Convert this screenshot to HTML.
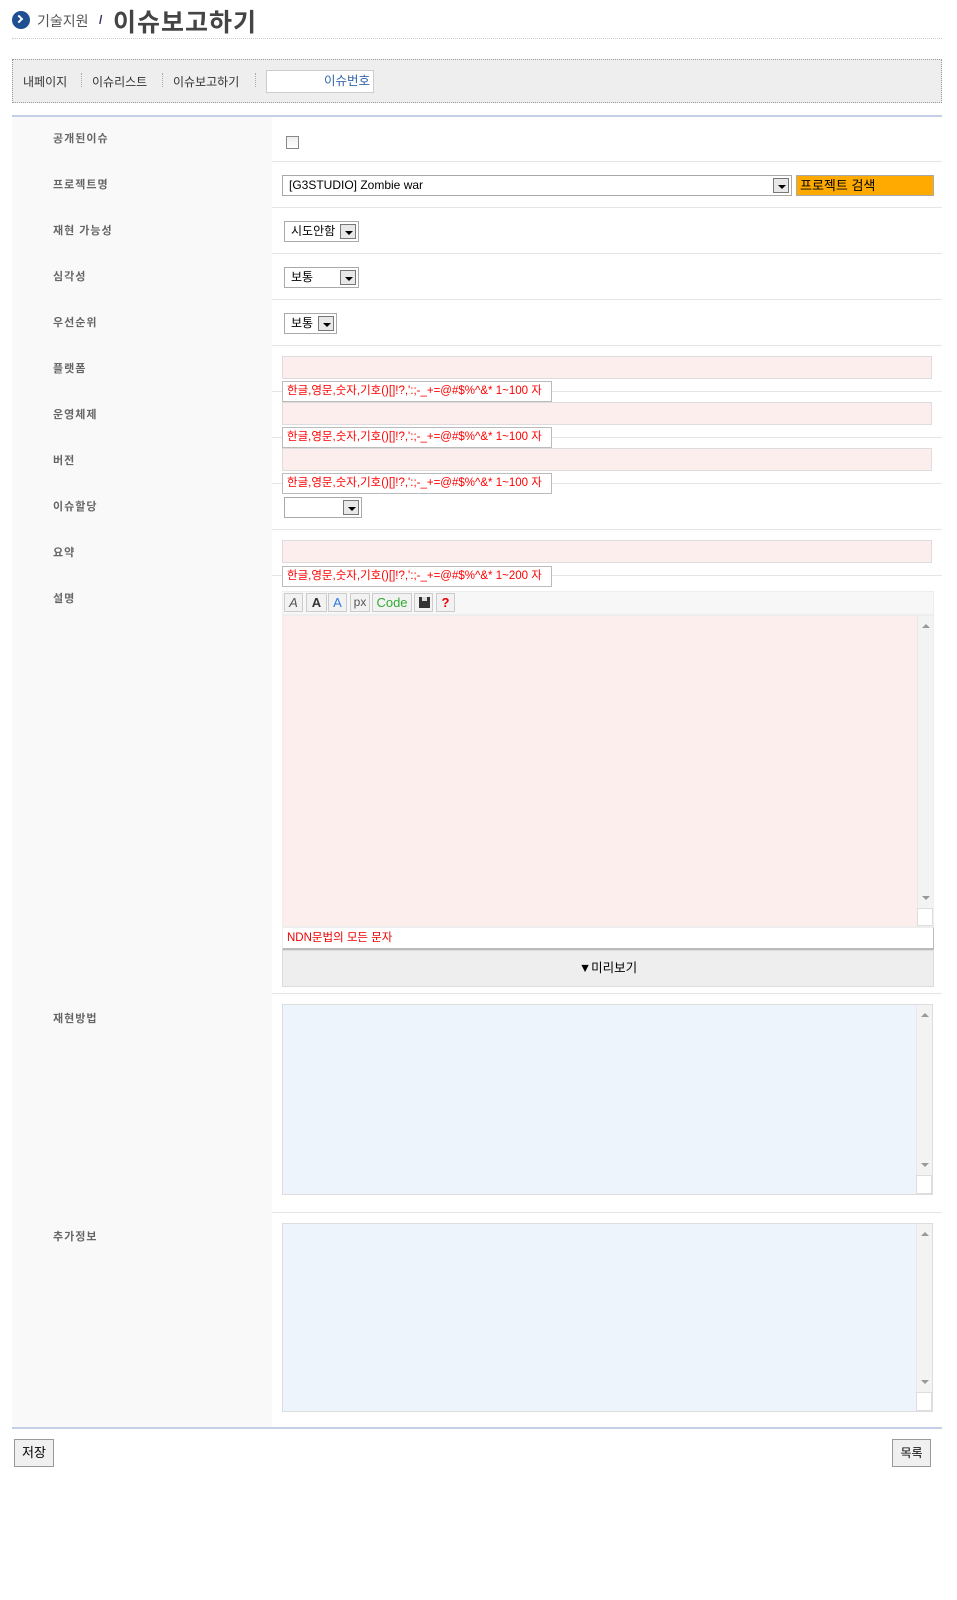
<!DOCTYPE html>
<html><head><meta charset="utf-8"><style>
*{margin:0;padding:0;box-sizing:border-box}
body{width:957px;height:1600px;background:#fff;position:relative;font-family:"Liberation Sans","Noto Sans CJK KR",sans-serif;font-size:12px;color:#333;overflow:hidden}
.a{position:absolute}
.lbl{position:absolute;left:53px;font-size:11px;font-weight:bold;color:#666;letter-spacing:1px}
.sep{position:absolute;left:272px;width:670px;height:1px;background:#e5e5e5}
.inp{position:absolute;left:282px;width:650px;height:23px;background:#fdeeee;border:1px solid #ddd}
.tip{position:absolute;left:282px;width:270px;height:21px;background:#fff;border:1px solid #bbb;color:#f00;font-size:11.5px;line-height:19px;padding-left:4px;white-space:nowrap}
.sel{position:absolute;height:21px;border:1px solid #aaa;background:#fff;font-size:12px;line-height:19px;padding-left:6px;color:#000}
.arr{position:absolute;right:2px;top:2px;width:16px;height:15px;border:1px solid #777;background:#e8e8e8}
.arr:after{content:"";position:absolute;left:4px;top:6px;border-left:4px solid transparent;border-right:4px solid transparent;border-top:4px solid #000}
.tb{position:absolute;top:593px;height:19px;border:1px solid #ccc;background:#f2f2f2;font-size:13px;line-height:17px;text-align:center}
.ta{position:absolute;left:282px;width:651px;border:1px solid #ddd;background:#edf4fc}
.sb{position:absolute;right:0;top:0;width:16px;background:#f3f3f3;border-left:1px solid #e8e8e8}
.btn{position:absolute;top:1439px;height:28px;border:1px solid #999;background:#f0f0f0;font-size:12px;line-height:26px;text-align:center;color:#000}
</style></head><body>
<div class="a" style="left:12px;top:11px;width:18px;height:18px;border-radius:50%;background:#1d4f91"></div>
<div class="a" style="left:17px;top:15px;width:6px;height:6px;border-right:2px solid #fff;border-top:2px solid #fff;transform:rotate(45deg);left:16px;top:16px"></div>
<div class="a" style="left:37px;top:11px;font-size:14px;color:#555">기술지원</div>
<div class="a" style="left:99px;top:13px;font-size:12px;color:#336;font-weight:bold">/</div>
<div class="a" style="left:113px;top:3px;font-size:25px;color:#444;font-weight:bold;letter-spacing:1px">이슈보고하기</div>
<div class="a" style="left:12px;top:38px;width:930px;border-top:1px dotted #ccc"></div>

<div class="a" style="left:12px;top:59px;width:930px;height:44px;background:#eee;border:1px dotted #999"></div>
<div class="a" style="left:23px;top:73px;font-size:12px;color:#333">내페이지</div>
<div class="a" style="left:81px;top:73px;height:14px;border-left:1px dotted #aaa"></div>
<div class="a" style="left:92px;top:73px;font-size:12px;color:#333">이슈리스트</div>
<div class="a" style="left:162px;top:73px;height:14px;border-left:1px dotted #aaa"></div>
<div class="a" style="left:173px;top:73px;font-size:12px;color:#333">이슈보고하기</div>
<div class="a" style="left:255px;top:73px;height:14px;border-left:1px dotted #aaa"></div>
<div class="a" style="left:266px;top:70px;width:108px;height:23px;background:#fff;border:1px solid #ccc;color:#36a;font-size:12.5px;text-align:right;padding-right:3px;line-height:21px">이슈번호</div>

<div class="a" style="left:12px;top:115px;width:930px;height:2px;background:#c5d0e6"></div>
<div class="a" style="left:12px;top:117px;width:260px;height:1310px;background:#f9f9f9"></div>

<div class="lbl" style="top:130px">공개된이슈</div>
<div class="a" style="left:286px;top:136px;width:13px;height:13px;border:1px solid #888;background:linear-gradient(#eee,#fff)"></div>
<div class="sep" style="top:161px"></div>
<div class="lbl" style="top:176px">프로젝트명</div>
<div class="sel" style="left:282px;top:175px;width:510px">[G3STUDIO] Zombie war<div class="arr"></div></div>
<div class="a" style="left:796px;top:175px;width:138px;height:21px;background:#ffaa00;border:1px solid #aaa;font-size:13px;line-height:19px;padding-left:3px;color:#000">프로젝트 검색</div>
<div class="sep" style="top:207px"></div>
<div class="lbl" style="top:222px">재현 가능성</div>
<div class="sel" style="left:284px;top:221px;width:75px">시도안함<div class="arr"></div></div>
<div class="sep" style="top:253px"></div>
<div class="lbl" style="top:268px">심각성</div>
<div class="sel" style="left:284px;top:267px;width:75px">보통<div class="arr"></div></div>
<div class="sep" style="top:299px"></div>
<div class="lbl" style="top:314px">우선순위</div>
<div class="sel" style="left:284px;top:313px;width:53px">보통<div class="arr"></div></div>
<div class="sep" style="top:345px"></div>
<div class="lbl" style="top:360px">플랫폼</div>
<div class="inp" style="top:356px"></div>
<div class="sep" style="top:391px"></div>
<div class="tip" style="top:381px">한글,영문,숫자,기호()[]!?,':;-_+=@#$%^&amp;* 1~100 자</div>
<div class="lbl" style="top:406px">운영체제</div>
<div class="inp" style="top:402px"></div>
<div class="sep" style="top:437px"></div>
<div class="tip" style="top:427px">한글,영문,숫자,기호()[]!?,':;-_+=@#$%^&amp;* 1~100 자</div>
<div class="lbl" style="top:452px">버전</div>
<div class="inp" style="top:448px"></div>
<div class="sep" style="top:483px"></div>
<div class="tip" style="top:473px">한글,영문,숫자,기호()[]!?,':;-_+=@#$%^&amp;* 1~100 자</div>
<div class="lbl" style="top:498px">이슈할당</div>
<div class="sel" style="left:284px;top:497px;width:78px"><div class="arr"></div></div>
<div class="sep" style="top:529px"></div>
<div class="lbl" style="top:544px">요약</div>
<div class="inp" style="top:540px"></div>
<div class="sep" style="top:575px"></div>
<div class="tip" style="top:566px">한글,영문,숫자,기호()[]!?,':;-_+=@#$%^&amp;* 1~200 자</div>
<div class="lbl" style="top:590px">설명</div>

<div class="a" style="left:282px;top:591px;width:652px;height:24px;background:#f7f7f7;border:1px solid #eee"></div>
<div class="tb" style="left:284px;width:19px;font-style:italic;color:#555">A</div>
<div class="tb" style="left:306px;width:21px;font-weight:bold;color:#333">A</div>
<div class="tb" style="left:328px;width:19px;color:#2a7ae2">A</div>
<div class="tb" style="left:350px;width:20px;color:#555;font-size:12px">px</div>
<div class="tb" style="left:372px;width:40px;color:#3a3;font-size:13px">Code</div>
<div class="tb" style="left:414px;width:19px"><div class="a" style="left:4px;top:3px;width:11px;height:11px;background:#333"></div><div class="a" style="left:7px;top:3px;width:5px;height:4px;background:#ddd"></div></div>
<div class="tb" style="left:436px;width:19px;color:#e00;font-weight:bold">?</div>
<div class="a" style="left:282px;top:615px;width:652px;height:312px;background:#fdeeee;border:1px solid #eee"><div class="sb" style="height:292px"><div class="a" style="left:4px;top:8px;border-left:4px solid transparent;border-right:4px solid transparent;border-bottom:4px solid #999"></div><div class="a" style="left:4px;bottom:8px;border-left:4px solid transparent;border-right:4px solid transparent;border-top:4px solid #999"></div></div><div class="a" style="right:0;bottom:0;width:16px;height:18px;background:#fff;border:1px solid #ddd"></div></div>
<div class="a" style="left:282px;top:927px;width:652px;height:23px;background:#fff;border:1px solid #eee;border-right:1px solid #bbb;border-bottom:2px solid #bbb;color:#e00;font-size:11.5px;line-height:20px;padding-left:4px">NDN문법의 모든 문자</div>
<div class="a" style="left:282px;top:950px;width:652px;height:37px;background:#eee;border:1px solid #ddd;text-align:center;line-height:35px;font-size:12.5px;color:#000">▼미리보기</div>
<div class="sep" style="top:993px"></div>

<div class="lbl" style="top:1010px">재현방법</div>
<div class="ta" style="top:1004px;height:191px"><div class="sb" style="height:170px"><div class="a" style="left:4px;top:8px;border-left:4px solid transparent;border-right:4px solid transparent;border-bottom:4px solid #999"></div><div class="a" style="left:4px;bottom:8px;border-left:4px solid transparent;border-right:4px solid transparent;border-top:4px solid #999"></div></div><div class="a" style="right:0;bottom:0;width:16px;height:19px;background:#fff;border:1px solid #ddd"></div></div>
<div class="sep" style="top:1212px"></div>

<div class="lbl" style="top:1228px">추가정보</div>
<div class="ta" style="top:1223px;height:189px"><div class="sb" style="height:168px"><div class="a" style="left:4px;top:8px;border-left:4px solid transparent;border-right:4px solid transparent;border-bottom:4px solid #999"></div><div class="a" style="left:4px;bottom:8px;border-left:4px solid transparent;border-right:4px solid transparent;border-top:4px solid #999"></div></div><div class="a" style="right:0;bottom:0;width:16px;height:19px;background:#fff;border:1px solid #ddd"></div></div>

<div class="a" style="left:12px;top:1427px;width:930px;height:2px;background:#c5d0e6"></div>
<div class="btn" style="left:14px;width:40px;font-size:13px">저장</div>
<div class="btn" style="left:892px;width:39px">목록</div>
</body></html>
